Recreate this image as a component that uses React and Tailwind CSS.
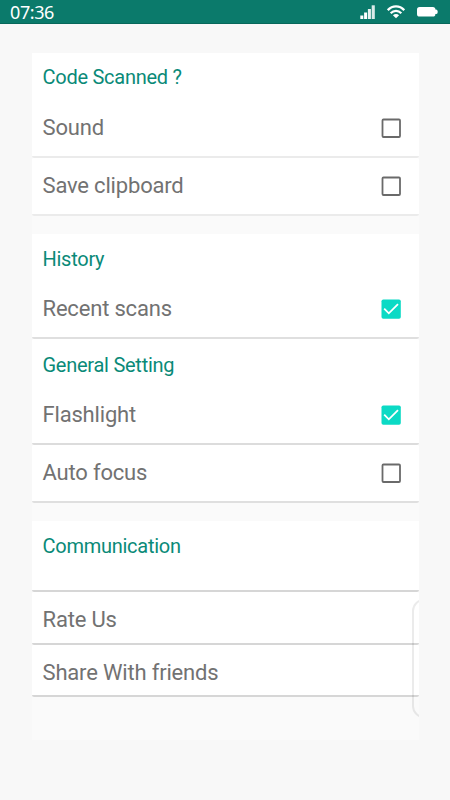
function StatusBar() {
  return (
    <header className="flex h-6 shrink-0 items-center justify-between border-b border-[#08685b] bg-[#0b7a6b] pr-[12px] pl-[10px] text-white">
      <span className="font-['Noto_Sans'] text-[18px] leading-6 tracking-[-0.4px]">07:36</span>
      <div className="flex items-center">
        <svg width="15" height="14" viewBox="0 0 15 14" fill="currentColor">
          <rect x="0.3" y="10.5" width="3" height="3.5" />
          <rect x="4.1" y="7.5" width="3" height="6.5" />
          <rect x="7.9" y="4" width="3" height="10" opacity="0.9" />
          <rect x="11.7" y="0.3" width="3.1" height="13.7" opacity="0.85" />
        </svg>
        <svg className="ml-3" width="18" height="14" viewBox="0 0 18 14" fill="none" stroke="currentColor" strokeWidth="2.3">
          <path d="M0.8 5.2C5.4 0.2 12.6 0.2 17.2 5.2" />
          <path d="M3.7 8.2C6.8 5 11.2 5 14.3 8.2" />
          <path d="M9 13.3L5.9 10.2C7.7 8.7 10.3 8.7 12.1 10.2Z" fill="currentColor" stroke="none" />
        </svg>
        <svg className="ml-3" width="21" height="10" viewBox="0 0 21 10" fill="currentColor">
          <rect width="18.4" height="9.6" rx="2.6" />
          <rect x="17" y="2.6" width="3.6" height="4.4" rx="1.6" />
        </svg>
      </div>
    </header>
  );
}

function Checkbox({ checked }) {
  return (
    <svg className="mt-[3px]" width="20" height="20" viewBox="0 0 20 20" fill="none">
      {checked ? (
        <>
          <rect x="0.5" y="0.5" width="19.3" height="19.3" rx="1.8" fill="#0bdac5" />
          <path d="M3.2 9.7L7.8 14.3L17 5.1" stroke="#fff" strokeWidth="1.8" />
        </>
      ) : (
        <rect x="1.5" y="1.5" width="17.5" height="17.5" rx="1" stroke="#6a6a6a" strokeWidth="1.8" />
      )}
    </svg>
  );
}

function Title({ children }) {
  return <h2 className="h-[49px] text-[20px] leading-[25px] tracking-[-0.26px] text-[#0a8a78]">{children}</h2>;
}

function Label({ children }) {
  return <span className="pt-[3px] text-[22px] leading-7 tracking-[-0.18px]">{children}</span>;
}

function Option({ label, checked }) {
  return (
    <div className="flex h-12 items-center justify-between pr-[8px]">
      <Label>{label}</Label>
      <Checkbox checked={checked} />
    </div>
  );
}

function Link({ label }) {
  return (
    <div className="flex h-12 items-center">
      <Label>{label}</Label>
    </div>
  );
}

export default function App() {
  return (
    <div className="flex h-[800px] w-[450px] flex-col overflow-hidden bg-[#f8f8f8] font-['Roboto',sans-serif] text-[#727272]">
      <StatusBar />
      <main className="relative mt-[29px] ml-8 h-[687px] w-[387px] overflow-hidden bg-[#fafafa]">
        <section className="h-[105px] rounded-b-[2px] border-b-2 border-[#ebebeb] bg-white px-[10.5px]">
          <div className="pt-3">
            <Title>Code Scanned ?</Title>
          </div>
          <div className="-mt-3">
            <Option label="Sound" />
          </div>
        </section>
        <section className="h-[58px] rounded-[2px] border-b-2 border-[#ebebeb] bg-white px-[10.5px] pt-[2px]">
          <Option label="Save clipboard" />
        </section>

        <section className="mt-[18px] h-[105px] rounded-b-[2px] border-b-2 border-[#dfdfdf] bg-white px-[10.5px]">
          <div className="pt-[13px]">
            <Title>History</Title>
          </div>
          <div className="-mt-[13px]">
            <Option label="Recent scans" checked />
          </div>
        </section>
        <section className="h-[106px] rounded-[2px] border-b-2 border-[#dcdcdc] bg-white px-[10.5px] pt-px">
          <div className="pt-[13px]">
            <Title>General Setting</Title>
          </div>
          <div className="-mt-[13px]">
            <Option label="Flashlight" checked />
          </div>
        </section>
        <section className="h-[58px] rounded-[2px] border-b-2 border-[#dfdfdf] bg-white px-[10.5px] pt-[2px]">
          <Option label="Auto focus" />
        </section>

        <section className="mt-[18px] h-[71px] rounded-b-[2px] border-b-2 border-[#d6d6d6] bg-white px-[10.5px] pt-[13px]">
          <Title>Communication</Title>
        </section>
        <section className="h-[53px] rounded-[2px] border-b-2 border-[#d6d6d6] bg-white px-[10.5px] pt-[2px]">
          <Link label="Rate Us" />
        </section>
        <section className="h-[52px] rounded-[2px] border-b-2 border-[#d6d6d6] bg-white px-[10.5px] pt-[2px]">
          <Link label="Share With friends" />
        </section>

        {/* edge panel handle */}
        <div className="absolute top-[546px] left-[380px] h-[119px] w-6 rounded-[15px] border-2 border-[#00000014]" />
      </main>
    </div>
  );
}
